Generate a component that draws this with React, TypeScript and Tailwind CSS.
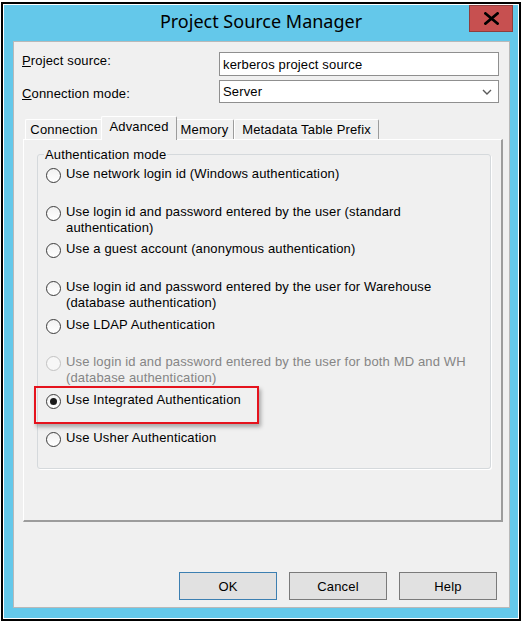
import type { ReactNode } from "react";

type AuthOption = {
  lines: string[];
  checked?: boolean;
  disabled?: boolean;
};

const options: AuthOption[] = [
  { lines: ["Use network login id (Windows authentication)"] },
  { lines: ["Use login id and password entered by the user (standard", "authentication)"] },
  { lines: ["Use a guest account (anonymous authentication)"] },
  { lines: ["Use login id and password entered by the user for Warehouse", "(database authentication)"] },
  { lines: ["Use LDAP Authentication"] },
  {
    lines: ["Use login id and password entered by the user for both MD and WH", "(database authentication)"],
    disabled: true
  },
  { lines: ["Use Integrated Authentication"], checked: true },
  { lines: ["Use Usher Authentication"] }
];

const tabs = [
  { label: "Connection", width: "w-[78px]" },
  { label: "Advanced", width: "w-[76px]", active: true },
  { label: "Memory", width: "w-[59px]" },
  { label: "Metadata Table Prefix", width: "w-[145px]" }
];

export default function App() {
  return (
    <div className="h-[622px] w-[523px] overflow-hidden bg-white pl-[1px] pt-[2px] font-['Liberation_Sans',Arial,sans-serif] text-[13px] leading-[15px] tracking-[0.15px] text-black">
      <div className="h-[619px] w-[520px] border-2 border-black">
        <div className="flex h-full flex-col border border-white bg-[#64c8ea] pl-[9px] pr-[8px]">
          <TitleBar />
          <div className="flex h-[567px] w-[497px] flex-col border border-[#b9b9b9] bg-[#f0f0f0]">
            <div className="ml-[8px] mr-[10px] mt-[10px] flex items-start">
              <label className="w-[197px] pt-[1px]">
                <u>P</u>roject source:
              </label>
              <div className="flex h-[24px] w-[280px] items-center border border-[#8f8f8f] bg-white pl-[3px]">
                kerberos project source
              </div>
            </div>
            <div className="ml-[8px] mr-[10px] mt-[4px] flex items-start">
              <label className="w-[197px] pt-[6px]">
                <u>C</u>onnection mode:
              </label>
              <div className="flex h-[23px] w-[280px] items-center justify-between border border-[#8f8f8f] bg-white pl-[3px] pr-[6px]">
                <span>Server</span>
                <svg width="10" height="6" viewBox="0 0 10 6" fill="none">
                  <path d="M1 1 L5 5 L9 1" stroke="#5a5a5a" strokeWidth="1.4" />
                </svg>
              </div>
            </div>

            <div className="ml-[9px] mr-[6px] mt-[13px] flex flex-col">
              <div className="flex h-[23px] items-end pl-[2px]">
                {tabs.map((tab) => (
                  <Tab key={tab.label} width={tab.width} active={tab.active}>
                    {tab.label}
                  </Tab>
                ))}
              </div>
              <div className="h-[383px] border-l border-t border-white border-b-2 border-r-2 border-b-[#9c9c9c] border-r-[#9c9c9c]">
                <div className="relative ml-[13px] mr-[10px] mt-[14px] h-[315px] rounded-[3px] border border-[#d5d9dc] shadow-[1px_1px_0_#ffffff]">
                  <span className="absolute left-[6px] top-[-8px] bg-[#f0f0f0] px-[1px]">Authentication mode</span>
                  <div className="flex flex-col pl-[8px] pt-[11px]">
                    {options.map((option, i) => (
                      <RadioRow key={i} option={option} />
                    ))}
                  </div>
                  <div className="absolute left-[-4px] top-[231px] h-[38px] w-[225px] border-2 border-[#e5131d] shadow-[2px_3px_4px_rgba(0,0,0,0.3)]" />
                </div>
              </div>
            </div>

            <div className="mr-[12px] mt-[50px] flex justify-end gap-[12px]">
              <DialogButton primary>OK</DialogButton>
              <DialogButton>Cancel</DialogButton>
              <DialogButton>Help</DialogButton>
            </div>
          </div>
        </div>
      </div>
    </div>
  );
}

function TitleBar() {
  return (
    <div className="relative -ml-[9px] -mr-[8px] flex h-[36px] justify-center">
      <span className="font-['Noto_Sans',sans-serif] text-[18px] leading-[33px] tracking-normal text-black">Project Source Manager</span>
      <div className="absolute right-[5px] top-0 flex h-[27px] w-[44px] items-center justify-center border border-[#8e3e3e] bg-[#c75050]">
        <svg width="15" height="13" viewBox="0 0 15 13">
          <path d="M1.5 1.5 L13.5 11.5 M13.5 1.5 L1.5 11.5" stroke="#000" strokeWidth="2.8" strokeLinecap="square" />
        </svg>
      </div>
    </div>
  );
}

function Tab({ children, width, active }: { children: ReactNode; width: string; active?: boolean }) {
  if (active) {
    return (
      <div
        className={`relative z-10 -mx-[2px] -mb-[1px] flex h-[24px] ${width} justify-center rounded-t-[2px] border-l border-t border-r border-white border-r-[#9c9c9c] bg-[#f0f0f0] pt-[2px]`}
      >
        {children}
      </div>
    );
  }
  return (
    <div
      className={`flex h-[20px] ${width} justify-center rounded-t-[2px] border-l border-t border-r border-white border-r-[#9c9c9c] bg-[#f0f0f0] pt-[2px]`}
    >
      {children}
    </div>
  );
}

function RadioRow({ option }: { option: AuthOption }) {
  return (
    <div className="flex h-[37.7px] items-start">
      <span
        className={
          option.disabled
            ? "mt-[2px] flex h-[15px] w-[15px] shrink-0 items-center justify-center rounded-full border border-[#c2c2c2] bg-[#f7f7f7]"
            : "mt-[2px] flex h-[15px] w-[15px] shrink-0 items-center justify-center rounded-full border border-[#3c3c3c] bg-gradient-to-b from-[#f2f2f2] to-white"
        }
      >
        {option.checked && <span className="h-[7px] w-[7px] rounded-full bg-[#1b1b1b]" />}
      </span>
      <div className={`ml-[5px] whitespace-nowrap leading-[16px] ${option.disabled ? "text-[#858585]" : "text-black"}`}>
        {option.lines.map((line) => (
          <div key={line}>{line}</div>
        ))}
      </div>
    </div>
  );
}

function DialogButton({ children, primary }: { children: ReactNode; primary?: boolean }) {
  return (
    <button
      className={`flex h-[28px] w-[98px] items-center justify-center border bg-[#e1e1e1] ${primary ? "border-[#3c7fb1]" : "border-[#7a7a7a]"}`}
    >
      {children}
    </button>
  );
}
